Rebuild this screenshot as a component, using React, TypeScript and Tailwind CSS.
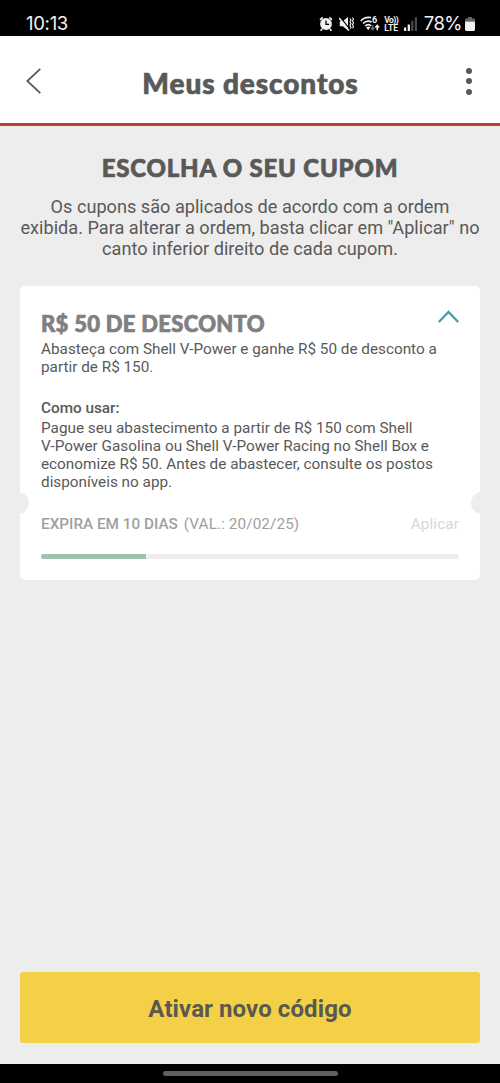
import React, { useState } from 'react';

interface Coupon {
  title: string;
  description: string[];
  howToUse: string[];
  expiresIn: string;
  validUntil: string;
  progress: number;
}

const coupon: Coupon = {
  title: 'R$ 50 DE DESCONTO',
  description: ['Abasteça com Shell V-Power e ganhe R$ 50 de desconto a', 'partir de R$ 150.'],
  howToUse: [
    'Pague seu abastecimento a partir de R$ 150 com Shell',
    'V-Power Gasolina ou Shell V-Power Racing no Shell Box e',
    'economize R$ 50. Antes de abastecer, consulte os postos',
    'disponíveis no app.',
  ],
  expiresIn: 'EXPIRA EM 10 DIAS',
  validUntil: '(VAL.: 20/02/25)',
  progress: 25,
};

const StatusBar: React.FC = () => (
  <div className="h-9 shrink-0 bg-black text-[#f2f2f2] flex items-start justify-between pl-[26px] pr-[25px] pt-[12px]">
    <span className="font-['Inter',sans-serif] text-[18.5px] leading-[23px] tracking-[-0.3px]">10:13</span>
    <div className="flex items-start">
      {/* Alarm */}
      <svg className="w-[14px] h-[16px] mt-[4px]" viewBox="0 0 14 16" fill="none">
        <path d="M1 3.8 3.7 1.4M13 3.8 10.3 1.4M3 13l-1.4 1.8M11 13l1.4 1.8" stroke="currentColor" strokeWidth="1.7" />
        <circle cx="7" cy="8" r="5.9" fill="currentColor" />
        <path d="M7 4.6V8.4h3.2" stroke="#000" strokeWidth="1.3" />
      </svg>
      {/* Vibrate / muted */}
      <svg className="w-[15px] h-[16px] mt-[4px] ml-[6.5px]" viewBox="0 0 15 16" fill="none">
        <path d="M.8 5.2h3L9 1v13.4l-5.2-4.1h-3z" fill="currentColor" />
        <path d="M1.2 1.2 11 13.4" stroke="#000" strokeWidth="1.2" />
        <path d="M.2 2 10 14.6" stroke="currentColor" strokeWidth="1.4" />
        <path d="m11 2.5 1 1.5-1 1.8 1 1.8-1 1.8 1 1.8-.7 1.6M13.5 1.5l1 1.8-1 1.8 1 1.8-1 1.8 1 1.8-1 1.8" stroke="currentColor" strokeWidth="1.1" />
      </svg>
      {/* Wi-Fi 6 */}
      <svg className="w-[20px] h-[16px] mt-[4px] ml-[5.5px]" viewBox="0 0 20 16" fill="none">
        <path d="M.8 4.9C3.8 1.6 7.6.9 11 1.6M3 7.5c2.4-2.5 5.5-3 8.6-1.6M5.2 10c1.8-1.8 4.3-1.8 6 0" stroke="currentColor" strokeWidth="1.6" />
        <path d="m8.2 13.9-2-2.4a3 3 0 0 1 4 0z" fill="currentColor" />
        <path d="M12.7 9.2v4.2M10.9 11.7l1.8 2 1.8-2" stroke="#777" strokeWidth="1.2" />
        <path d="M17.2 14.2V9.7M15.3 11.4l1.9-2 1.9 2" stroke="currentColor" strokeWidth="1.5" />
        <text x="12" y="7.4" fontSize="9" fontWeight="700" fontFamily="Roboto, sans-serif" fill="currentColor">6</text>
      </svg>
      <div className="ml-[3.5px] mt-[4px] w-[16px] flex flex-col items-center font-['Roboto',sans-serif] font-bold text-[8.5px] leading-[8px] whitespace-nowrap">
        <span className="tracking-[-0.6px]">Vo))</span>
        <span>LTE</span>
      </div>
      {/* Signal */}
      <svg className="w-[13px] h-[14px] mt-[4.5px] ml-[5px]" viewBox="0 0 13 14">
        <path d="M0 10.5h2.2V14H0zM3.7 7.5h2.2V14H3.7z" fill="currentColor" />
        <path d="M7.2 3.8h2.2V14H7.2zM10.8.2H13V14h-2.2z" fill="#4a4a4a" />
      </svg>
      <span className="ml-[6.5px] font-['Inter',sans-serif] text-[18.5px] leading-[23px] tracking-[-0.5px]">78%</span>
      {/* Battery */}
      <svg className="w-[10px] h-[14px] mt-[4.5px] ml-[3px]" viewBox="0 0 10 14">
        <path d="M3 0h4v1.6h1.6A1.4 1.4 0 0 1 10 3v1.6H0V3a1.4 1.4 0 0 1 1.4-1.4H3z" fill="#666" />
        <path d="M0 4.4h10v8.2a1.4 1.4 0 0 1-1.4 1.4H1.4A1.4 1.4 0 0 1 0 12.6z" fill="currentColor" />
      </svg>
    </div>
  </div>
);

const Header: React.FC = () => (
  <header className="h-[90px] shrink-0 bg-white border-b-[3px] border-[#bb422f] flex items-center justify-between pl-[26px] pr-[28px]">
    <button type="button" aria-label="Voltar" className="mt-[2px]">
      <svg className="w-[15px] h-[26px]" viewBox="0 0 15 26" fill="none">
        <path d="M14.3.8 1.3 13l13 12.2" stroke="#595959" strokeWidth="1.8" />
      </svg>
    </button>
    <h1 className="font-['Lato',sans-serif] font-black text-[28px] leading-8 tracking-[0.9px] [-webkit-text-stroke:0.7px_#595959] text-[#595959] mt-[6px] mr-[6px]">Meus descontos</h1>
    <button type="button" aria-label="Mais opções" className="mt-[3px] flex flex-col gap-[4.5px]">
      <span className="w-[6px] h-[6px] rounded-full bg-[#595959]" />
      <span className="w-[6px] h-[6px] rounded-full bg-[#595959]" />
      <span className="w-[6px] h-[6px] rounded-full bg-[#595959]" />
    </button>
  </header>
);

const CouponCard: React.FC<{ coupon: Coupon }> = ({ coupon }) => {
  const [open, setOpen] = useState(true);

  return (
    <section className="relative mt-[27px] bg-white rounded-[5px] px-[21px] pt-[27px] pb-[21px] overflow-hidden">
      <div className="flex items-start justify-between">
        <h3 className="font-['Lato',sans-serif] font-black text-[22px] leading-[22px] tracking-[0.3px] [-webkit-text-stroke:0.7px_#808080] text-[#808080] whitespace-nowrap">{coupon.title}</h3>
        <button type="button" aria-label="Detalhes" onClick={() => setOpen(!open)} className="-mt-[3px]">
          <svg className={`w-[21px] h-[13px] ${open ? '' : 'rotate-180'}`} viewBox="0 0 21 13" fill="none">
            <path d="m.8 12 9.7-10L20.2 12" stroke="#459cae" strokeWidth="2.3" />
          </svg>
        </button>
      </div>
      <div className="mt-[5px] text-[15.3px] leading-[18px] whitespace-nowrap">
        {coupon.description.map((line) => <p key={line}>{line}</p>)}
      </div>
      {open && (
        <div className="mt-[23px] text-[15.3px] leading-[18px] whitespace-nowrap">
          <h4 className="font-medium mb-[2px]">Como usar:</h4>
          {coupon.howToUse.map((line) => <p key={line}>{line}</p>)}
        </div>
      )}

      {/* Ticket notches */}
      <span className="absolute left-[-13px] top-[206px] w-[22px] h-[22px] rounded-full bg-[#ededed]" />
      <span className="absolute right-[-13px] top-[206px] w-[22px] h-[22px] rounded-full bg-[#ededed]" />

      <div className="mt-[23px] flex items-center justify-between text-[15.3px] leading-[20px] text-[#a0a0a0] whitespace-nowrap">
        <p>
          <span className="font-medium">{coupon.expiresIn}</span>
          <span className="ml-[6px] tracking-[0.1px]">{coupon.validUntil}</span>
        </p>
        <button type="button" className="text-[#d7d7d7] tracking-[0.1px]">Aplicar</button>
      </div>
      <div className="mt-[20px] h-[5px] rounded-full bg-[#eeeeee] overflow-hidden">
        <div className="h-full bg-[#9bc3ae]" style={{ width: `${coupon.progress}%` }} />
      </div>
    </section>
  );
};

const App: React.FC = () => {
  return (
    <div className="w-[500px] h-[1083px] flex flex-col overflow-hidden bg-[#ededed] text-[#595959] font-['Roboto',sans-serif]">
      <StatusBar />
      <Header />
      <main className="flex-1 flex flex-col px-5 pt-[28px] pb-[21px]">
        <h2 className="font-['Lato',sans-serif] font-black text-[24px] leading-7 tracking-[0.8px] [-webkit-text-stroke:0.7px_#595959] text-center whitespace-nowrap">ESCOLHA O SEU CUPOM</h2>
        <div className="mt-[14px] text-[18.15px] leading-[21px] text-center whitespace-nowrap">
          <p>Os cupons são aplicados de acordo com a ordem</p>
          <p>exibida. Para alterar a ordem, basta clicar em "Aplicar" no</p>
          <p>canto inferior direito de cada cupom.</p>
        </div>
        <CouponCard coupon={coupon} />
        <button type="button" className="mt-auto h-[71px] shrink-0 rounded-[3px] bg-[#f4d047] font-bold text-[24px] tracking-[0.1px] text-[#595950] pt-[2px]">
          Ativar novo código
        </button>
      </main>
      <div className="h-[19px] shrink-0 bg-black flex items-center justify-center">
        <div className="w-[175px] h-[5px] rounded-full bg-[#606060]" />
      </div>
    </div>
  );
};

export default App;
